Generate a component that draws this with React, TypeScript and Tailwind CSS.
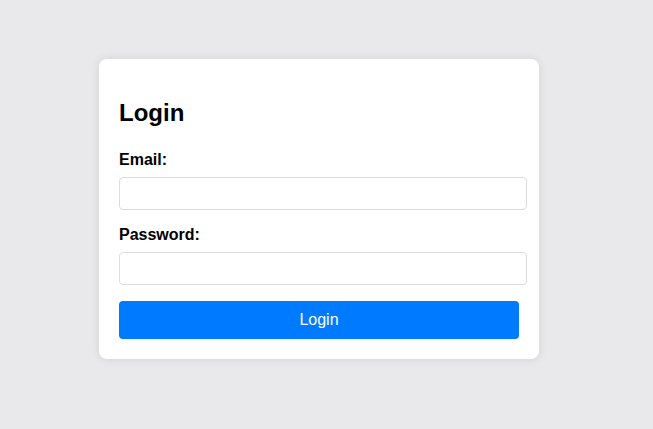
import { useState } from 'react';

export default function App() {
  const [email, setEmail] = useState('');
  const [password, setPassword] = useState('');

  return (
    <div
      className="min-h-[429px] w-full bg-[#e9e9ec] pt-[59px]"
      style={{ fontFamily: '"Liberation Sans", Arial, sans-serif' }}
    >
      <div className="ml-[99px] w-[440px] rounded-lg bg-white p-5 shadow-[0_0_10px_rgba(0,0,0,0.1)]">
        <h2 className="mt-5 text-[24px] font-bold leading-[27.6px] text-black">Login</h2>

        <form className="mt-[24px]" onSubmit={(e) => e.preventDefault()}>
          <label className="block text-[16px] font-bold leading-[18.4px] text-black">Email:</label>
          <input
            type="email"
            value={email}
            onChange={(e) => setEmail(e.target.value)}
            className="mt-2 block h-[33px] w-[408px] rounded border border-[#dcdcdc] bg-white px-2 text-[16px] outline-none"
          />

          <label className="mt-4 block text-[16px] font-bold leading-[18.4px] text-black">
            Password:
          </label>
          <input
            type="password"
            value={password}
            onChange={(e) => setPassword(e.target.value)}
            className="mt-2 block h-[33px] w-[408px] rounded border border-[#dcdcdc] bg-white px-2 text-[16px] outline-none"
          />

          <button
            type="submit"
            className="mt-4 block h-[38px] w-[400px] rounded bg-[#007bff] text-[16px] leading-[18.4px] text-white"
          >
            Login
          </button>
        </form>
      </div>
    </div>
  );
}
